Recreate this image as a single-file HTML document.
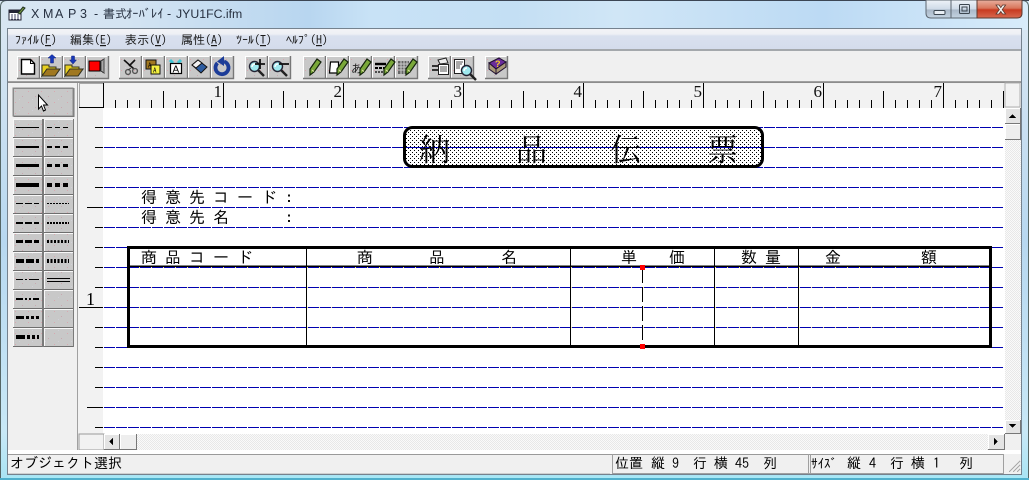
<!DOCTYPE html>
<html lang="ja"><head><meta charset="utf-8"><title>XMAP3</title>
<style>
html,body{margin:0;padding:0;width:1029px;height:480px;overflow:hidden;background:#c8e0f4}
svg{display:block}
.c{shape-rendering:crispEdges}
text{font-family:"IPAGothic","Noto Sans CJK JP",sans-serif;fill:#000}
.t16{font-size:16px}
.t14{font-size:14px}
.m{font-size:12px;fill:#1a1a1a}
.r{font-family:"Liberation Serif",serif;font-size:17px;fill:#111}
</style></head><body>
<svg width="1029" height="480" viewBox="0 0 1029 480" xmlns="http://www.w3.org/2000/svg">
<defs>
<linearGradient id="tb" x1="0" x2="1" y1="0" y2="0">
<stop offset="0" stop-color="#d8e6f2"/><stop offset=".12" stop-color="#d4e4f2"/><stop offset=".3" stop-color="#b8d6f0"/><stop offset=".36" stop-color="#c8e2f6"/><stop offset=".5" stop-color="#c4dff4"/><stop offset=".6" stop-color="#d0e6f6"/><stop offset=".8" stop-color="#bcdaf4"/><stop offset="1" stop-color="#d8ecfa"/>
</linearGradient>
<linearGradient id="side" x1="0" x2="0" y1="0" y2="1">
<stop offset="0" stop-color="#dce8f2"/><stop offset=".5" stop-color="#b8d8f0"/><stop offset=".9" stop-color="#c8e8f6"/><stop offset="1" stop-color="#a8e4f4"/>
</linearGradient>
<linearGradient id="menu" x1="0" x2="0" y1="0" y2="1">
<stop offset="0" stop-color="#f2f3f6"/><stop offset=".25" stop-color="#eef0f5"/><stop offset=".35" stop-color="#d9e0ee"/><stop offset="1" stop-color="#d4dcec"/>
</linearGradient>
<linearGradient id="mn" x1="0" x2="0" y1="0" y2="1"><stop offset="0" stop-color="#eef3f8"/><stop offset=".5" stop-color="#cfdbe8"/><stop offset=".55" stop-color="#aab8c8"/><stop offset="1" stop-color="#c4d4e2"/></linearGradient>
<linearGradient id="cl" x1="0" x2="0" y1="0" y2="1"><stop offset="0" stop-color="#e8b0a0"/><stop offset=".45" stop-color="#d9765c"/><stop offset=".55" stop-color="#c83a20"/><stop offset="1" stop-color="#d86a50"/></linearGradient>
<pattern id="btn" width="13" height="11" patternUnits="userSpaceOnUse"><rect width="13" height="11" fill="#c8c8c8"/><rect x="2" y="3" width="1" height="1" fill="#d8a8b0"/><rect x="9" y="8" width="1" height="1" fill="#c8a8b0"/><rect x="6" y="0" width="1" height="1" fill="#d0d0d8"/></pattern>
<pattern id="dots" width="4" height="4" patternUnits="userSpaceOnUse"><rect width="4" height="4" fill="#fff"/><rect x="0" y="0" width="1" height="1" fill="#000"/><rect x="2" y="2" width="1" height="1" fill="#000"/></pattern>
<pattern id="dith" width="2" height="2" patternUnits="userSpaceOnUse"><rect width="2" height="2" fill="#fafafa"/><rect width="1" height="1" fill="#e8e8e8"/><rect x="1" y="1" width="1" height="1" fill="#e8e8e8"/></pattern>
<pattern id="t12" x="103" width="12" height="8" patternUnits="userSpaceOnUse"><rect x="0" y="0" width="1" height="8" fill="#000"/></pattern>
<symbol id="b" width="23" height="23" overflow="visible"><rect width="22" height="23" fill="url(#btn)"/><path d="M0 22V0H21" fill="none" stroke="#fff" stroke-width="1" transform="translate(.5 .5)"/><path d="M0 22.5H22.5V0" fill="none" stroke="#777" stroke-width="1.4"/></symbol>
<symbol id="p" width="12" height="16" overflow="visible"><path d="M8 0l4 3-7 10-4 3 0-6z" fill="#7aa83a" stroke="#14240c" stroke-width="1.2"/><path d="M3 11l2 1.500" stroke="#e8e0b0"/></symbol>
<symbol id="lens" width="18" height="18" overflow="visible"><path d="M10 10l6 6" stroke="#222" stroke-width="2.4"/><circle cx="6.5" cy="6.5" r="5" fill="#9fe8ee" stroke="#223" stroke-width="1.4"/><path d="M4 7a3 3 0 0 1 3-3" stroke="#fff" stroke-width="1.4" fill="none"/></symbol>
<symbol id="fold" width="18" height="14" overflow="visible"><path d="M0 14V3h7v2h7v3H5l-5 6zM0 14h13l5-7H5z" fill="#e8d020" stroke="#332" stroke-width="1"/><path d="M0 14h13l5-7H5z" fill="#a07820" stroke="#332"/></symbol>
</defs>

<!-- frame -->
<rect width="1029" height="480" rx="7" fill="url(#side)"/>
<rect x="0" y="0" width="1029" height="30" fill="url(#tb)"/>
<path d="M.5 479V7Q.5.5 7 .5H1022Q1028.5.5 1028.5 7V479" fill="none" stroke="#566"/>
<rect x="7" y="476" width="1015" height="4" fill="#a8e8f6"/>
<rect x="0" y="478" width="1029" height="2" fill="#50b0cc"/>
<rect x="0" y="0" width="1029" height="1" fill="#3c4654"/>
<g class="c">
<rect x="7" y="28" width="1015" height="447" fill="#f0f0f0"/>
<rect x="7" y="28" width="1015" height="1" fill="#75828e"/>
<rect x="7" y="28" width="1" height="447" fill="#75828e"/>
<rect x="1021" y="28" width="1" height="447" fill="#75828e"/>
<rect x="7" y="474" width="1015" height="1" fill="#75828e"/>
<rect x="8" y="29" width="1013" height="20" fill="url(#menu)"/>
<rect x="8" y="49" width="1013" height="2" fill="#a4a8ac"/>
<rect x="8" y="81" width="1013" height="1" fill="#a0a0a0"/>
</g>

<!-- title -->
<g transform="translate(9 7)"><rect x="0" y="3" width="12" height="10" fill="#fff" stroke="#223"/><rect x="0" y="3" width="12" height="3" fill="#223"/><path d="M2 8h8M2 10h8M2 12h8" stroke="#446" stroke-dasharray="2 1"/><path d="M9 6l5-6 2 1-5 6z" fill="#7a9a40" stroke="#232"/></g>
<text x="31 43 55 68 80" y="18" style="font-family:'Liberation Sans',sans-serif;font-size:12.5px;fill:#263040">XMAP3</text>
<text x="94" y="18" style="font-family:'Liberation Sans',sans-serif;font-size:12.5px;fill:#263040">-</text>
<text x="103" y="18" style="font-size:12px;fill:#263040">書式</text>
<text x="126" y="18" style="font-size:12.5px;fill:#263040">ｵｰﾊﾞﾚｲ</text>
<text x="167" y="18" style="font-family:'Liberation Sans',sans-serif;font-size:12.5px;fill:#263040">-</text>
<text x="176" y="18" style="font-family:'Liberation Sans',sans-serif;font-size:12.3px;fill:#263040">JYU1FC.ifm</text>

<!-- window buttons -->
<g>
<path d="M926 0V13Q926 18 931 18H951V0z" fill="url(#mn)" stroke="#5c6670"/>
<rect x="951" y="0" width="26" height="18" fill="url(#mn)" stroke="#5c6670"/>
<path d="M977 0V18H1017Q1022 18 1022 13V0z" fill="url(#cl)" stroke="#5c3a30"/>
<rect x="934" y="10.5" width="11" height="4" rx="1" fill="#e8eef4" stroke="#3c4650"/>
<rect x="959.5" y="4.5" width="10" height="9" rx="1" fill="none" stroke="#3c4650"/><rect x="962" y="7" width="5" height="4" fill="none" stroke="#3c4650"/>
<path d="M996 5l3 0 1.8 2.6L1002.6 5h3l-3.4 4.6 3.4 4.4h-3l-1.8-2.6-1.8 2.6h-3l3.4-4.4z" fill="#f4f2f0" stroke="#5a3a30" stroke-width=".8"/>
</g>

<!-- menu -->
<g class="m">
<text x="15" y="44" class="m">ﾌｧｲﾙ(<tspan text-decoration="underline">F</tspan>)</text>
<text x="70" y="44" class="m">編集(<tspan text-decoration="underline">E</tspan>)</text>
<text x="125" y="44" class="m">表示(<tspan text-decoration="underline">V</tspan>)</text>
<text x="181" y="44" class="m">属性(<tspan text-decoration="underline">A</tspan>)</text>
<text x="236" y="44" class="m">ﾂｰﾙ(<tspan text-decoration="underline">T</tspan>)</text>
<text x="286" y="44" class="m">ﾍﾙﾌﾟ(<tspan text-decoration="underline">H</tspan>)</text>
</g>

<!-- toolbar -->
<g class="tb">
<use href="#b" x="17" y="56"/><use href="#b" x="40" y="56"/><use href="#b" x="63" y="56"/><use href="#b" x="86" y="56"/>
<use href="#b" x="119" y="56"/><use href="#b" x="142" y="56"/><use href="#b" x="165" y="56"/><use href="#b" x="188" y="56"/><use href="#b" x="211" y="56"/>
<use href="#b" x="245" y="56"/><use href="#b" x="268" y="56"/>
<use href="#b" x="303" y="56"/><use href="#b" x="326" y="56"/><use href="#b" x="349" y="56"/><use href="#b" x="372" y="56"/><use href="#b" x="395" y="56"/>
<use href="#b" x="428" y="56"/><use href="#b" x="451" y="56"/>
<use href="#b" x="485" y="56"/>
</g>
<!-- new -->
<path d="M21.5 59.5h9l4 4v10.5h-13z" fill="#fff" stroke="#000" stroke-width="1.4"/><path d="M30.5 59.5v4h4" fill="none" stroke="#000"/>
<!-- open -->
<use href="#fold" x="42" y="62" width="18" height="14"/><path d="M48 58l4-3.500 4 3.500h-2.500v5h-3v-5z" fill="#1838b8" stroke="#102080" stroke-width=".5"/>
<!-- save -->
<use href="#fold" x="65" y="62" width="18" height="14"/><path d="M69.500 60l3.500 4 3.500-4h-2v-4h-3v4z" fill="#1838b8" stroke="#102080" stroke-width=".5"/>
<!-- stop -->
<g class="c"><rect x="89" y="61" width="11" height="10" fill="#f00" stroke="#000"/><path d="M101 61l3-2v14l-3-2z" fill="#aaa" stroke="#444"/></g>
<!-- scissors -->
<path d="M124 60l10 9M135 60l-6 6" stroke="#111" stroke-width="1.6" fill="none"/><circle cx="128" cy="72" r="2.400" fill="none" stroke="#555" stroke-width="1.400"/><circle cx="135" cy="71" r="2.400" fill="none" stroke="#555" stroke-width="1.400"/><path d="M131 68l-3 2" stroke="#333"/>
<!-- copy -->
<g class="c"><rect x="146" y="60" width="10" height="9" fill="#a07820" stroke="#111"/><rect x="151" y="65" width="9" height="9" fill="#f4f040" stroke="#111"/></g><text x="148" y="68" style="font-size:7px">A</text><text x="153" y="73" style="font-size:7px">A</text>
<!-- alarm A -->
<path d="M170 60l3 3M181 60l-3 3" stroke="#40c8d8" stroke-width="3"/><rect x="170.500" y="63.500" width="11" height="10" fill="#fff" stroke="#000" stroke-width="1.200"/><text x="172.500" y="72.500" style="font-family:'Liberation Sans',sans-serif;font-size:10px">A</text>
<!-- eraser -->
<path d="M192 65l6-5 9 7-6 6z" fill="#2c5ca0" stroke="#111"/><path d="M192 65l6-5 4 3-6 5z" fill="#f0f0f0" stroke="#111"/>
<!-- undo -->
<path d="M224 61.500a6.500 6.500 0 1 1-6.500 1.500" fill="none" stroke="#1c3c98" stroke-width="3.800"/><path d="M224 56v10l-7-4.500z" fill="#1c3c98"/>
<!-- zoom -->
<use href="#lens" x="248" y="60" width="18" height="18"/><path d="M255 64h10M260 59v10" stroke="#111" stroke-width="1.800"/>
<use href="#lens" x="271" y="60" width="18" height="18"/><path d="M279 64h10" stroke="#111" stroke-width="1.800"/>
<!-- pencils -->
<use href="#p" x="309" y="59" width="12" height="16"/>
<path d="M330.500 62h8v11h-9z" fill="#fff" stroke="#000" stroke-width="1.200"/><use href="#p" x="336" y="59" width="10" height="14"/>
<text x="351" y="73" style="font-size:12px;fill:#222">あ</text><use href="#p" x="359" y="59" width="10" height="15"/>
<path d="M375 64h11" stroke="#000" stroke-width="2.400"/><path d="M375 68h11" stroke="#000" stroke-width="2" stroke-dasharray="3 1"/><path d="M375 72h11" stroke="#000" stroke-width="1.200" stroke-dasharray="2 1"/><use href="#p" x="383" y="59" width="11" height="16"/>
<g><rect x="398" y="61" width="11" height="13" fill="#666"/><path d="M398 64h11M398 67h11M398 70h11M401 61v13M404 61v13M407 61v13" stroke="#ccc"/></g><use href="#p" x="405" y="59" width="11" height="16"/>
<!-- print, preview -->
<path d="M438 60l8-2 2 5-8 1z" fill="#eee" stroke="#222"/><rect x="432" y="65" width="6" height="2" fill="#333"/><rect x="432" y="69" width="6" height="2" fill="#333"/><rect x="438.500" y="64.500" width="10" height="10" fill="#fff" stroke="#222"/><path d="M440 67h7M440 69h7M440 71h7" stroke="#555"/>
<rect x="454.500" y="59.500" width="10" height="14" fill="#fff" stroke="#222"/><path d="M456 62h7M456 64h6M456 66h4M456 68h4" stroke="#555"/><use href="#lens" x="460" y="64" width="11" height="11"/>
<!-- help -->
<path d="M489 63l10-5 7 4-10 7z" fill="#6a2c9c" stroke="#201030"/><path d="M489 63v6l7 5v-5zM496 69v5l10-7v-5z" fill="#a89878" stroke="#201030"/><text x="495" y="67" style="font-size:9px;font-family:'Liberation Sans';font-weight:bold;fill:#f4d020">?</text>

<!-- left panel -->
<g class="c">
<rect x="8" y="83" width="69" height="369" fill="#f0f0f0"/>
<rect x="77" y="83" width="1" height="369" fill="#a0a0a0"/>
<rect x="78" y="83" width="26" height="369" fill="#f2f2f2"/>
<rect x="8" y="82" width="1013" height="1" fill="#8c8c8c"/>
</g>

<!-- tool buttons -->
<g class="c">
<rect x="13" y="88" width="60" height="28" fill="url(#btn)" stroke="#8c8c8c"/>
<path d="M13.500 115.500V88.500H73" fill="none" stroke="#8a8a8a"/><path d="M13.500 116.500H74V88" fill="none" stroke="#777"/>
</g>
<path d="M38.500 95v14l3-3 2 5 2-1-2-5h4z" fill="#fff" stroke="#000"/>

<g class="c">
<!-- rows -->
<g fill="url(#btn)" stroke="none">
<rect x="13" y="119" width="29" height="18"/><rect x="44" y="119" width="29" height="18"/>
<rect x="13" y="138" width="29" height="18"/><rect x="44" y="138" width="29" height="18"/>
<rect x="13" y="157" width="29" height="18"/><rect x="44" y="157" width="29" height="18"/>
<rect x="13" y="176" width="29" height="18"/><rect x="44" y="176" width="29" height="18"/>
<rect x="13" y="195" width="29" height="18"/><rect x="44" y="195" width="29" height="18"/>
<rect x="13" y="214" width="29" height="18"/><rect x="44" y="214" width="29" height="18"/>
<rect x="13" y="233" width="29" height="18"/><rect x="44" y="233" width="29" height="18"/>
<rect x="13" y="252" width="29" height="18"/><rect x="44" y="252" width="29" height="18"/>
<rect x="13" y="271" width="29" height="18"/><rect x="44" y="271" width="29" height="18"/>
<rect x="13" y="290" width="29" height="18"/><rect x="44" y="290" width="29" height="18"/>
<rect x="13" y="309" width="29" height="18"/><rect x="44" y="309" width="29" height="18"/>
<rect x="13" y="328" width="29" height="18"/><rect x="44" y="328" width="29" height="18"/>
</g>
<!-- bevels -->
<path d="M13 119.500h29M13 138.500h29M13 157.500h29M13 176.500h29M13 195.500h29M13 214.500h29M13 233.500h29M13 252.500h29M13 271.500h29M13 290.500h29M13 309.500h29M13 328.500h29M44 119.500h29M44 138.500h29M44 157.500h29M44 176.500h29M44 195.500h29M44 214.500h29M44 233.500h29M44 252.500h29M44 271.500h29M44 290.500h29M44 309.500h29M44 328.500h29M13.500 119v228M44.500 119v228" stroke="#f8f8f8"/>
<path d="M13 137.500h60M13 156.500h60M13 175.500h60M13 194.500h60M13 213.500h60M13 232.500h60M13 251.500h60M13 270.500h60M13 289.500h60M13 308.500h60M13 327.500h60M13 346.500h61" stroke="#6e6e6e"/>
<path d="M42.500 119v228M43.500 119v228M73.500 119v228" stroke="#7a7a7a"/>
<!-- line samples left -->
<g stroke="#000" fill="none">
<path d="M16 127.500h23"/>
<path d="M16 147h23" stroke-width="2"/>
<path d="M16 165.500h23" stroke-width="3"/>
<path d="M16 185h23" stroke-width="4"/>
<path d="M16 203.500h23" stroke-dasharray="7 2"/>
<path d="M16 223h23" stroke-width="2" stroke-dasharray="7 2"/>
<path d="M16 241.500h23" stroke-width="3" stroke-dasharray="7 2"/>
<path d="M16 261h23" stroke-width="4" stroke-dasharray="8 2"/>
<path d="M16 279.500h7M25 279.500h2M29 279.500h10"/>
<path d="M16 299h7M25 299h2M29 299h2M33 299h6" stroke-width="2"/>
<path d="M16 317.500h8M26 317.500h3M31 317.500h3M36 317.500h3" stroke-width="3"/>
<path d="M16 337h9M27 337h3M32 337h3M37 337h2" stroke-width="4"/>
</g>
<!-- line samples right -->
<g stroke="#000" fill="none">
<path d="M47 127.500h22" stroke-dasharray="5 3"/>
<path d="M47 147h22" stroke-width="2" stroke-dasharray="5 3"/>
<path d="M47 165.500h22" stroke-width="3" stroke-dasharray="5 3"/>
<path d="M47 185h22" stroke-width="4" stroke-dasharray="5 3"/>
<path d="M47 203.500h22" stroke-dasharray="2 1"/>
<path d="M47 223h22" stroke-width="2" stroke-dasharray="2 1"/>
<path d="M47 241.500h22" stroke-width="3" stroke-dasharray="2 1.500"/>
<path d="M47 261h22" stroke-width="4" stroke-dasharray="2 1.500"/>
<path d="M47 278.500h23M47 281.500h23"/>
</g>
</g>

<!-- ruler -->
<g class="c">
<rect x="79" y="83" width="23" height="24" fill="#f2f2f2"/>
<rect x="79" y="83" width="24" height="1" fill="#a8a8a8"/>
<rect x="79" y="83" width="1" height="24" fill="#a8a8a8"/>
<rect x="79" y="107" width="24" height="1" fill="#000"/>
<rect x="103" y="84" width="900" height="24" fill="#f2f2f2"/>
<rect x="103" y="100" width="901" height="8" fill="url(#t12)"/>
<path d="M163.500 91v17M283.500 91v17M403.500 91v17M523.500 91v17M643.500 91v17M763.500 91v17M883.500 91v17M1003.500 91v17" stroke="#000"/>
<path d="M103.500 83v25M223.500 83v25M343.500 83v25M463.500 83v25M583.500 83v25M703.500 83v25M823.500 83v25M943.500 83v25" stroke="#000"/>
</g>
<g text-anchor="end">
<text class="r" x="222" y="97">1</text><text class="r" x="342" y="97">2</text><text class="r" x="462" y="97">3</text><text class="r" x="582" y="97">4</text><text class="r" x="702" y="97">5</text><text class="r" x="822" y="97">6</text><text class="r" x="942" y="97">7</text>
</g>

<!-- document -->
<g class="c">
<rect x="103" y="108" width="902" height="326" fill="#fff"/>
<!-- scroll areas -->
<rect x="1005" y="83" width="16" height="24" fill="#f2f2f2"/>
<rect x="1005" y="83" width="15" height="24" fill="none" stroke="#b0b0b0"/>
<rect x="1005" y="140" width="16" height="282" fill="url(#dith)"/>
<rect x="104" y="434" width="885" height="16" fill="url(#dith)"/>
<rect x="79" y="434" width="25" height="16" fill="#f2f2f2" stroke="#999"/>
<rect x="8" y="450" width="1013" height="4" fill="#fff"/>
<!-- rule lines -->
<g stroke="#000">
<path d="M95 127.500h8M95 147.500h8M95 167.500h8M95 187.500h8M87 207.500h16M95 227.500h8M95 247.500h8M95 267.500h8M95 287.500h8M79 307.500h24M95 327.500h8M95 347.500h8M95 367.500h8M95 387.500h8M87 407.500h16M95 427.500h8"/>
</g>
<path d="M130 287.500H989M130 307.500H989M130 327.500H989M130 267.500H989" stroke="#f0e890"/>
<g stroke="#0000b0" stroke-dasharray="11 1">
<path d="M104 127.500H1004M104 167.500H1004M104 187.500H1004M104 207.500H1004M104 227.500H1004M104 247.500H1004M104 267.500H1004M104 287.500H1004M104 307.500H1004M104 327.500H1004M104 347.500H1004M104 367.500H1004M104 387.500H1004M104 407.500H1004M104 427.500H1004"/>
</g>
</g>
<!-- title box -->
<rect x="404.500" y="127.500" width="358" height="39" rx="8" fill="url(#dots)" stroke="#000" stroke-width="3"/>
<g class="c"><path d="M104 147.500H403M764 147.500H1004" stroke="#0000b0" stroke-dasharray="11 1"/><path d="M406 147.500H762" stroke="#0000b0"/></g>
<g style="font-family:'Noto Serif CJK JP','Noto Serif CJK SC',serif;font-size:31px;font-weight:400">
<text x="419" y="161" style="font-family:'Noto Serif CJK JP','Noto Serif CJK SC',serif">納</text>
<text x="516" y="161" style="font-family:'Noto Serif CJK JP','Noto Serif CJK SC',serif">品</text>
<text x="610" y="161" style="font-family:'Noto Serif CJK JP','Noto Serif CJK SC',serif">伝</text>
<text x="707" y="161" style="font-family:'Noto Serif CJK JP','Noto Serif CJK SC',serif">票</text>
</g>

<!-- labels -->
<g class="t16">
<text x="141" y="203" class="t16" style="letter-spacing:8px">得意先コード:</text>
<text x="141" y="223" class="t16" style="letter-spacing:8px">得意先名</text>
<text x="285" y="223" class="t16">:</text>
</g>

<!-- table -->
<g class="c">
<path d="M128.500 246v102M990.500 246v102" stroke="#000" stroke-width="3"/>
<path d="M127 247.500H992M127 346.500H992" stroke="#000" stroke-width="3"/>
<path d="M130 266H989" stroke="#000" stroke-width="1"/>
<path d="M130 266.500H989" stroke="#000"/>
<path d="M306.500 248V346M570.500 248V346M714.500 248V346M798.500 248V346" stroke="#000"/>
<path d="M642.500 268V345" stroke="#000" stroke-dasharray="15 4"/>
<rect x="640" y="265" width="5" height="5" fill="#f00"/>
<rect x="640" y="344" width="5" height="5" fill="#f00"/>
</g>
<g>
<text x="141" y="263" class="t16" style="letter-spacing:8px">商品コード</text>
<text x="357" y="263" class="t16">商</text><text x="429" y="263" class="t16">品</text><text x="501" y="263" class="t16">名</text>
<text x="621" y="263" class="t16">単</text><text x="669" y="263" class="t16">価</text>
<text x="741" y="263" class="t16">数</text><text x="765" y="263" class="t16">量</text>
<text x="825" y="263" class="t16">金</text><text x="921" y="263" class="t16">額</text>
<text x="86" y="305" style="font-family:'Liberation Serif',serif;font-size:18px">1</text>
</g>

<!-- scrollbars -->
<g class="c">
<rect x="1005" y="108" width="15" height="16" fill="#e4e4e4"/><path d="M1005.500 123V108.500H1020" fill="none" stroke="#fff"/><path d="M1005 123.500h16M1020.500 108v16" stroke="#777"/>
<rect x="1005" y="124" width="15" height="16" fill="#eee"/><path d="M1005.500 139V124.500H1020" fill="none" stroke="#fff"/><path d="M1005 139.500h16M1020.500 124v16" stroke="#777"/>
<path d="M1009 118h7l-3.500-4z" fill="#000"/>
<rect x="1005" y="420" width="15" height="14" fill="#e4e4e4"/><path d="M1005.500 433V420.500H1020" fill="none" stroke="#fff"/><path d="M1005 433.500h16M1020.500 420v14" stroke="#777"/>
<path d="M1009 424h7l-3.500 4z" fill="#000"/>
<rect x="104" y="434" width="16" height="16" fill="#e4e4e4"/><path d="M104.500 449V434.500H120" fill="none" stroke="#fff"/><path d="M104 449.500h16M119.500 434v16" stroke="#777"/>
<path d="M113 438v7l-4-3.500z" fill="#000"/>
<rect x="120" y="434" width="17" height="16" fill="#eee"/><path d="M120.500 449V434.500H137" fill="none" stroke="#fff"/><path d="M120 449.500h17M136.500 434v16" stroke="#777"/>
<rect x="988" y="434" width="17" height="16" fill="#e4e4e4"/><path d="M988.500 449V434.500H1005" fill="none" stroke="#fff"/><path d="M988 449.500h17M1004.500 434v16" stroke="#777"/>
<path d="M994 438v7l4-3.500z" fill="#000"/>
</g>

<!-- status bar -->
<g class="c">
<rect x="8" y="454" width="1013" height="20" fill="#f0f0f0"/>
<path d="M8 454.500H1003" stroke="#9a9a9a"/>
<path d="M612 473.500H1003M612.500 454v20M810.500 454v20M808.500 454v20M1003.500 454v20" stroke="#a0a0a0"/>
<path d="M8 473.500H610" stroke="#d0d0d0"/>
<path d="M1009 472l11-11M1013 472l7-7M1017 472l3-3" stroke="#aaa" stroke-width="1"/>
</g>
<g class="t14">
<text x="10" y="468" class="t14">オブジェクト選択</text>
<text x="615" y="468" class="t14">位置</text><text x="651" y="468" class="t14">縦</text><text x="672" y="468" class="t14">9</text><text x="693" y="468" class="t14">行</text><text x="714" y="468" class="t14">横</text><text x="735" y="468" class="t14">45</text><text x="763" y="468" class="t14">列</text>
<text x="811" y="468" class="t14" style="font-size:13px">ｻｲｽﾞ</text><text x="847" y="468" class="t14">縦</text><text x="869" y="468" class="t14">4</text><text x="890" y="468" class="t14">行</text><text x="911" y="468" class="t14">横</text><text x="933" y="468" class="t14">1</text><text x="959" y="468" class="t14">列</text>
</g>
</svg>
</body></html>
